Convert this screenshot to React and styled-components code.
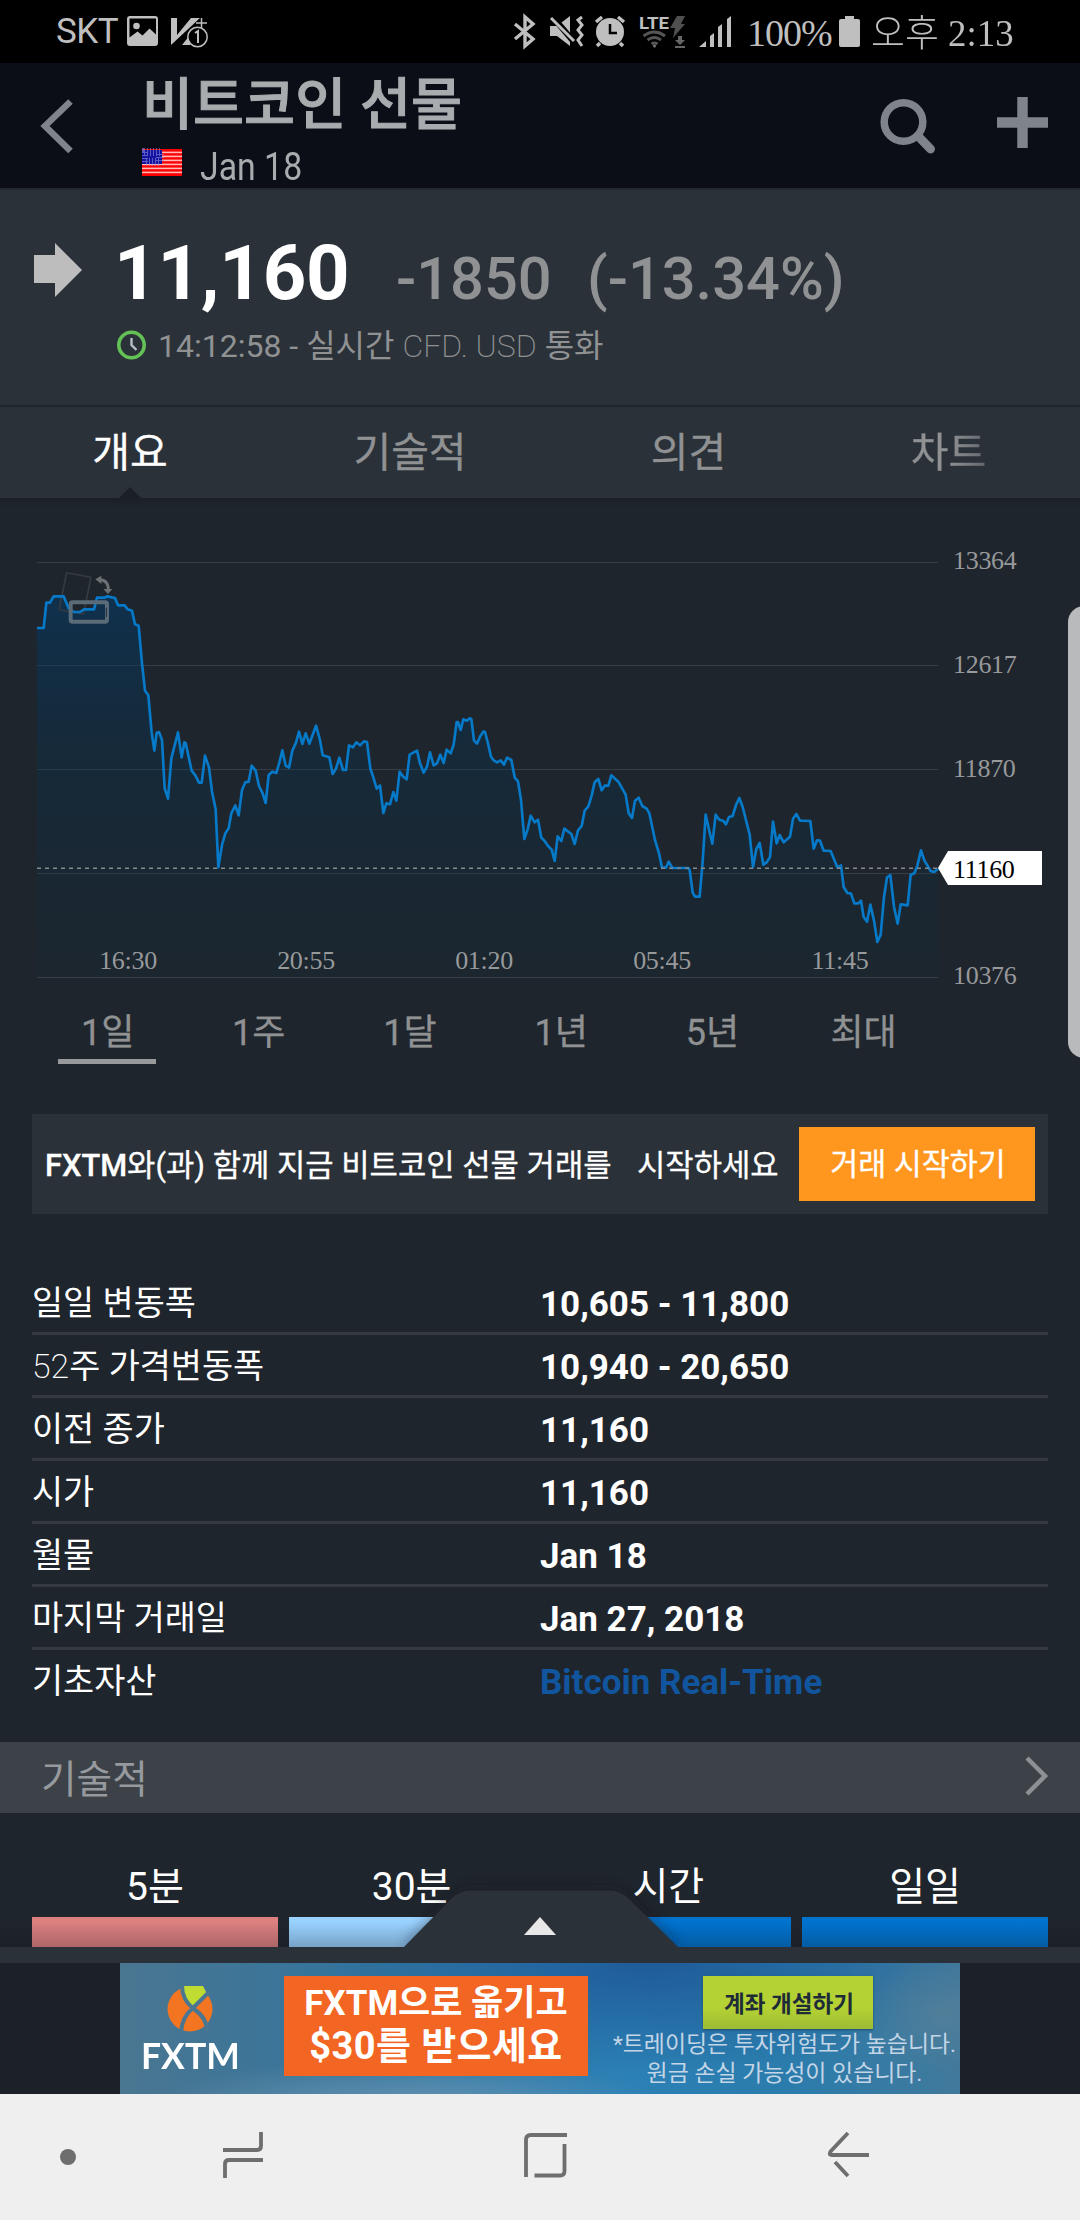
import React from 'react'
import styled, { createGlobalStyle } from 'styled-components';

const Global = createGlobalStyle`
*{
    box-sizing:border-box;
}
body{
    margin:0;
    background:#1f252c;
    font-family:Roboto,"Noto Sans CJK KR",sans-serif;
}
svg{
    display:block;
    flex:none;
}
`
const Screen = styled.div`
    width:1080px;
    height:2220px;
    position:relative;
    overflow:hidden;
    display:flex;
    flex-direction:column;
    background:#1f252c;
    white-space:nowrap;
`
const Squeeze = styled.span`
    display:inline-block;
    transform:scaleX(${p => p.x});
    transform-origin:left center;
`

/* status bar */
const StatusBar = styled.div`
    height:63px;
    background:#000;
    color:#bfbfbf;
    display:flex;
    justify-content:space-between;
    padding:0 61px 0 56px;
`
const Carrier = styled.span`
    font-size:35px;
    line-height:63px;
    width:71px;
    letter-spacing:-0.5px;
`
const StatusSide = styled.div`
    display:flex;
`
const Clock = styled.span`
    font-family:"Liberation Serif","Noto Sans CJK KR",serif;
    font-size:38px;
    line-height:67px;
    letter-spacing:${p => p.gap || 0}px;
    width:${p => p.w}px;
    padding-left:${p => p.left || 0}px;
    font-weight:300;
`

/* header */
const Header = styled.div`
    height:127px;
    background:#0b0e17;
    border-bottom:2px solid #23292f;
    color:#a9acae;
    display:flex;
`
const Title = styled.h1`
    margin:0 0 0 -4px;
    font-size:55.5px;
    font-weight:500;
    line-height:85px;
    height:80px;
    -webkit-text-stroke:1px #a9acae;
`
const TitleBox = styled.div`
    width:735px;
    padding-left:1px;
`
const SubTitle = styled.div`
    display:flex;
    font-size:38px;
    line-height:49px;
    margin-left:-4px;
`
const Month = styled.span`
    padding-left:18px;
`

/* price */
const Quote = styled.div`
    height:217px;
    background:#2b3138;
    border-bottom:2px solid #20262d;
    color:#8f9193;
    padding:38px 0 0 34px;
`
const PriceRow = styled.div`
    display:flex;
    height:90px;
    align-items:baseline;
`
const Arrow = styled.svg`
    align-self:flex-start;
    margin-top:15px;
`
const Price = styled.span`
    font-size:76px;
    font-weight:700;
    color:#fff;
    line-height:90px;
    width:282px;
    margin-left:32px;
    letter-spacing:-0.2px;
`
const Change = styled.span`
    font-size:59.6px;
    font-weight:500;
    width:${p => p.w}px;
`
const TimeRow = styled.div`
    display:flex;
    align-items:center;
    height:46px;
    padding:0 0 0 83px;
    margin-top:2px;
    font-size:32px;
    gap:11px;
    svg{
        margin-top:3px;
    }
`
const Thin = styled.span`
    font-weight:200;
`
const Regular = styled.span`
    font-weight:400;
`

/* tabs */
const Tabs = styled.div`
    height:91px;
    flex:none;
    background:#2b3138;
    display:flex;
    font-size:41px;
    line-height:92px;
`
const Tab = styled.div`
    position:relative;
    width:${p => p.w}px;
    text-align:center;
    color:${p => p.on ? '#fff' : '#8f9193'};
    -webkit-text-stroke:0.3px;
`
const FadeTab = styled(Tab)`
    color:transparent;
    background:linear-gradient(90deg,#8f9193 50%,#53585e 70%);
    background-clip:text;
    -webkit-background-clip:text;
`
const Notch = styled.i`
    position:absolute;
    left:119px;
    bottom:0;
    border:11px solid transparent;
    border-top:0;
    border-bottom-color:#1b2027;
`
const TabShade = styled.div`
    height:42px;
    background:linear-gradient(#1b2028,#1f252c 10px);
`

/* chart */
const ChartRow = styled.div`
    display:flex;
    height:440px;
    position:relative;
`
const Plot = styled.div`
    width:953px;
    position:relative;
`
const Times = styled.div`
    position:absolute;
    left:39px;
    top:406px;
    display:flex;
`
const Time = styled.span`
    width:178px;
    text-align:center;
    font:26px/30px "Liberation Serif",serif;
    letter-spacing:-0.3px;
    color:#97999b;
`
const Axis = styled.div`
    display:flex;
    flex-direction:column;
    font:26px/30px "Liberation Serif",serif;
    color:#97999b;
    padding-top:6px;
    gap:73.8px;
    letter-spacing:-0.3px;
`
const Tag = styled.div`
    position:absolute;
    left:938px;
    top:311px;
    width:104px;
    height:34px;
    padding-left:15px;
    background:#fff;
    color:#000;
    clip-path:polygon(10px 0,100% 0,100% 100%,10px 100%,0 50%);
    font:26px/37px "Liberation Serif",serif;
    letter-spacing:-0.3px;
`
const EdgeHandle = styled.div`
    position:absolute;
    right:-20px;
    top:606px;
    width:32px;
    height:452px;
    border-radius:16px;
    background:#b9babc;
`
const Ranges = styled.div`
    display:flex;
    padding-left:32px;
    height:134px;
    color:#8f9193;
    font-size:36px;
    line-height:48px;
    padding-top:29px;
`
const Range = styled.div`
    width:151.2px;
    text-align:center;
    -webkit-text-stroke:0.3px;
`
const Line = styled.div`
    width:98px;
    height:5px;
    margin:2px auto 0 26px;
    background:#98999b;
`

/* promo */
const Promo = styled.div`
    margin:0 32px;
    height:100px;
    flex:none;
    background:#2b3138;
    display:flex;
    align-items:center;
    padding:0 13px;
    color:#fff;
`
const PromoText = styled.span`
    width:${p => p.w}px;
    font-size:30.8px;
    padding-bottom:3px;
    -webkit-text-stroke:0.3px;
    b{
        font-weight:500;
    }
`
const PromoButton = styled.div`
    width:236px;
    height:74px;
    line-height:75px;
    text-align:center;
    background:#ff971e;
    font-size:30.4px;
    padding-left:2px;
    -webkit-text-stroke:0.3px;
`

/* details */
const Details = styled.div`
    margin:58px 32px 0;
    height:470px;
    flex:none;
`
const DetailRow = styled.div`
    height:63px;
    display:flex;
    align-items:center;
    color:#fff;
    border-bottom:3px solid ${p => p.last ? 'transparent' : '#353a42'};
`
const Label = styled.div`
    width:508px;
    font-size:33.8px;
    line-height:60px;
    padding-top:3px;
    font-weight:${p => p.thin ? 200 : 400};
`
const Value = styled.div`
    font-size:35px;
    line-height:62px;
    padding-top:5px;
    font-weight:700;
    color:${p => p.link ? '#12559f' : '#fff'};
`
const Section = styled.div`
    height:71px;
    flex:none;
    background:#3d4249;
    color:#969a9e;
    display:flex;
    align-items:center;
    justify-content:space-between;
    padding:0 31px 3px 41px;
    font-size:38.7px;
`
const Signals = styled.div`
    display:grid;
    grid-template-columns:repeat(4,1fr);
    gap:11px;
    padding:46px 32px 0;
    height:134px;
    flex:none;
`
const Signal = styled.div`
    color:#fff;
    font-size:39px;
    line-height:57px;
    text-align:center;
    i{
        display:block;
        height:30px;
        margin-top:1px;
        background:${p => p.bg};
    }
`
const Pull = styled.svg`
    position:absolute;
    left:0;
    top:1870px;
`
const Drawer = styled.div`
    height:16px;
    flex:none;
    background:#2b3138;
`

/* ad */
const AdZone = styled.div`
    height:131px;
    flex:none;
    background:#1c2028;
    padding:0 120px;
`
const Ad = styled.div`
    height:131px;
    display:flex;
    background:
        radial-gradient(ellipse 260px 50px at 290px 145px,#7fa0b8bb,transparent),
        radial-gradient(ellipse 90px 60px at 820px 50px,#5f839788,transparent),
        radial-gradient(ellipse 330px 110px at 530px 0px,#1f5b98,transparent),
        linear-gradient(90deg,#4a7691,#32749d 30%,#2b80b5 60%,#2b7cac 80%,#41799b);
`
const Brand = styled.div`
    width:164px;
    padding-top:23px;
    padding-left:21px;
    color:#fff;
    font:700 37px/45px Lato,sans-serif;
    svg{
        margin-left:26px;
    }
`
const AdOffer = styled.div`
    width:304px;
    height:100px;
    margin-top:13px;
    background:#f26522;
    color:#fff;
    font-size:35px;
    font-weight:700;
    line-height:42px;
    padding-top:7px;
    text-align:center;
`
const AdPrice = styled.span`
    font-size:38px;
    letter-spacing:0.4px;
`
const AdRight = styled.div`
    flex:1;
    padding-top:13px;
    padding-left:21px;
    text-align:center;
    color:#c3d5e6;
    font-size:22.9px;
    line-height:29px;
`
const AdButton = styled.div`
    width:170px;
    height:53px;
    margin:0 auto 1px 94px;
    line-height:57px;
    background:linear-gradient(#b4d233 60%,#9dbb35);
    box-shadow:0 1px 2px #1d4d6b;
    color:#1e2c38;
    font-size:22.5px;
    font-weight:700;
    padding-left:2px;
`
const NavBar = styled.div`
    height:126px;
    flex:none;
    background:#efefef;
`

const times = ['16:30', '20:55', '01:20', '05:45', '11:45']
const levels = ['13364', '12617', '11870', '', '10376']
const ranges = ['1일', '1주', '1달', '1년', '5년', '최대']
const details = [
    ['일일 변동폭', '10,605 - 11,800'],
    ['52주 가격변동폭', '10,940 - 20,650'],
    ['이전 종가', '11,160'],
    ['시가', '11,160'],
    ['월물', 'Jan 18'],
    ['마지막 거래일', 'Jan 27, 2018'],
    ['기초자산', 'Bitcoin Real-Time'],
]
const signals = [['5분', '#dd8080'], ['30분', '#99d2ff'], ['시간', '#0073cf'], ['일일', '#0073cf']]

// price line, three units per pixel
const line = '111,264 131,264 139,188 150,188 161,169 191,169 206,205 222,216 240,216 252,208 282,208 291,173 313,173 322,169 345,174 354,196 374,196 383,208 396,212 405,253 416,257 426,370 435,452 445,466 455,578 463,632 470,578 477,576 486,600 494,745 504,776 514,655 534,577 545,652 553,607 557,609 575,692 586,706 597,728 605,728 615,647 627,682 636,755 647,808 655,982 666,915 676,880 686,865 694,820 706,796 716,826 726,750 736,727 746,725 755,677 767,692 777,738 788,760 797,789 806,705 817,695 829,699 838,668 847,631 857,677 867,683 877,632 888,608 897,575 907,612 917,580 928,611 948,557 960,600 968,646 988,652 998,702 1008,686 1018,653 1029,690 1038,690 1047,616 1059,622 1069,607 1080,616 1092,604 1101,606 1111,685 1120,712 1130,746 1140,736 1150,819 1159,790 1170,793 1180,756 1189,782 1199,695 1210,710 1220,718 1229,644 1251,632 1260,670 1271,698 1281,680 1290,637 1301,676 1311,670 1321,644 1331,669 1340,629 1352,640 1361,614 1370,546 1374,546 1382,570 1390,538 1401,542 1409,535 1414,537 1422,602 1431,611 1441,588 1451,574 1455,576 1464,610 1473,650 1481,661 1491,667 1502,661 1512,674 1521,653 1534,660 1544,712 1554,724 1563,780 1573,897 1583,868 1592,827 1604,847 1614,839 1624,893 1634,903 1644,918 1655,929 1664,963 1673,889 1684,903 1693,866 1714,882 1724,912 1734,871 1745,858 1754,812 1765,799 1775,766 1784,727 1795,717 1805,751 1814,737 1825,737 1834,706 1855,725 1877,764 1886,820 1896,834 1905,782 1916,773 1927,798 1940,806 1948,820 1965,900 1977,940 1986,983 1998,983 2006,965 2017,984 2065,984 2069,990 2078,1058 2085,1070 2099,1070 2108,964 2117,824 2128,873 2137,911 2147,824 2158,839 2169,842 2178,853 2187,831 2198,828 2208,795 2218,774 2228,801 2249,884 2259,981 2269,927 2279,909 2290,974 2300,967 2310,951 2319,845 2330,910 2339,885 2351,907 2370,890 2379,836 2389,822 2400,842 2431,843 2441,926 2451,901 2460,902 2471,932 2492,933 2512,982 2523,976 2531,1041 2542,1059 2553,1061 2563,1090 2575,1090 2583,1082 2591,1131 2601,1145 2611,1094 2622,1142 2632,1206 2642,1184 2652,1071 2661,1012 2671,1005 2682,1100 2693,1151 2702,1093 2723,1096 2732,1004 2743,1000 2752,977 2763,931 2773,961 2792,993 2802,996 2814,987'

const LeftIcons = () => (
    <svg width="90" height="63" viewBox="127 0 90 63" fill="#bfbfbf">
        <path fillRule="evenodd" d="M130 16h25q3 0 3 3v24q0 3-3 3h-25q-3 0-3-3V19q0-3 3-3zM129.500 18.500v19l8-6 5 4 7-7 6.500 6v-16z" />
        <circle cx="136.500" cy="26" r="3.300" />
        <path d="M171 18h6v17l14-17h9l-29 27z" />
        <path d="M201.500 18v10M196 23h11" stroke="#bfbfbf" strokeWidth="1.500" />
        <path d="M182 45l8-10v10z" />
        <circle cx="197.500" cy="37" r="9.700" fill="#000" stroke="#bfbfbf" strokeWidth="1.500" />
        <path d="M195 33l3-2v12" stroke="#bfbfbf" strokeWidth="2" fill="none" />
    </svg>
)

const RightIcons = () => (
    <svg width="235" height="63" viewBox="512 0 235 63" fill="#bfbfbf">
        <path d="M515 24l18 15-8 7V17l8 7-18 15" fill="none" stroke="#bfbfbf" strokeWidth="3.400" />
        <path d="M550 26h7l13-10v30l-13-10h-7z" />
        <path d="M552 16l22 26" stroke="#000" strokeWidth="6" />
        <path d="M551 18l23 23" stroke="#bfbfbf" strokeWidth="3" />
        <path d="M582 17l-4 3 4 5-4 5 4 5-4 5 4 6" fill="none" stroke="#bfbfbf" strokeWidth="3" />
        <circle cx="610" cy="32" r="14" />
        <path d="M596 22l6-5M624 22l-6-5M600 43l-3 3M620 43l3 3" stroke="#bfbfbf" strokeWidth="3.500" />
        <path d="M610 24v9h7" fill="none" stroke="#000" strokeWidth="2.500" />
        <text x="639" y="29" fontSize="16" fontWeight="700" fontFamily="Roboto" textLength="30" lengthAdjust="spacingAndGlyphs">LTE</text>
        <g fill="none" stroke="#555" strokeWidth="3">
            <path d="M643.500 36q11-8 21.500 0M647.500 40q7-5 13.500 0M651.500 44q3-2 6 0" />
        </g>
        <circle cx="654.500" cy="46" r="1.500" fill="#777" />
        <path d="M677 16h8l-4 8h4l-12 14 2-10h-5z" fill="#4f4f4f" />
        <path d="M678 36h4v4h3l-5 5-5-5h3zM675 46h10v2h-10z" fill="#666" />
        <path d="M706 41v6h-7zM714 33v14h-4V36zM722 24v23h-4V27zM731 16v31h-4V19z" />
    </svg>
)

const Flag = () => (
    <svg width="40" height="33" viewBox="0 -6 40 33">
        <rect width="40" height="27" fill="#f00" />
        {[2, 6, 10, 14, 18, 22].map(y => <rect key={y} y={y + 0.6} width="40" height="1.600" fill="#ffb9b9" />)}
        <rect y="1" width="20" height="14" fill="#1414a0" />
        <rect x="2" y="3" width="16" height="10" fill="none" stroke="#8a8ae0" strokeWidth="8" strokeDasharray="1 2" opacity=".6" />
    </svg>
)

const Chart = () => (
    <svg width="953" height="440" viewBox="0 0 2859 1320">
        <defs>
            <linearGradient id="area" gradientUnits="userSpaceOnUse" x1="0" y1="169" x2="0" y2="1312">
                <stop offset="0" stopColor="#003c6e" stopOpacity=".5" />
                <stop offset=".4" stopColor="#00355a" stopOpacity=".3" />
                <stop offset="1" stopColor="#003048" stopOpacity=".1" />
            </linearGradient>
        </defs>
        <g stroke="#363d44" strokeWidth="3">
            {[67.5, 376.5, 688.5, 1000.5, 1312.5].map(y => <path key={y} d={`M111 ${y}H2814`} />)}
        </g>
        <polygon points={`111,1311 ${line} 2814,1311`} fill="url(#area)" />
        <path d="M203 99l66 12q4 1 3 5l-21 103q-1 4-5 3l-65-12q-4-1-3-5l21-103q1-4 4-3z" fill="none" stroke="#353b42" strokeWidth="5" />
        <polyline points={line} fill="none" stroke="#0679c8" strokeWidth="8" strokeLinejoin="round" />
        <path d="M111 984.500H2814" stroke="#84898c" strokeWidth="4.500" strokeDasharray="12 12" />
        <rect x="212" y="187" width="109" height="58" rx="6" fill="none" stroke="#5b6b78" strokeWidth="12" />
        <path d="M319 203v28" stroke="#1b2c3a" strokeWidth="3" />
        <path d="M300 119q26 2 25 32" fill="none" stroke="#6b7074" strokeWidth="9" />
        <path d="M286 118l18-11v25zM310 147h27l-13 15z" fill="#6b7074" />
    </svg>
)

const App = () => {
    return (
        <Screen>
            <Global />
            <StatusBar>
                <StatusSide>
                    <Carrier>SKT</Carrier>
                    <LeftIcons />
                </StatusSide>
                <StatusSide>
                    <RightIcons />
                    <Clock w={92} gap={-1}>100%</Clock>
                    <svg width="21" height="63" viewBox="0 0 21 63"><path d="M6 16h9v3h4q2 0 2 2v24q0 2-2 2H2q-2 0-2-2V21q0-2 2-2h4z" fill="#bfbfbf" /></svg>
                    <Clock w={159} left={11}><Squeeze x={0.97}>오후 2:13</Squeeze></Clock>
                </StatusSide>
            </StatusBar>
            <Header>
                <svg width="145" height="125" viewBox="0 63 145 125"><path d="M70.500 101.500L45 126l25.500 25" fill="none" stroke="#7f848b" strokeWidth="6.500" /></svg>
                <TitleBox>
                    <Title>비트코인 선물</Title>
                    <SubTitle>
                        <Flag />
                        <Month><Squeeze x={0.89}>Jan 18</Squeeze></Month>
                    </SubTitle>
                </TitleBox>
                <svg width="200" height="125" viewBox="880 63 200 125" fill="none" stroke="#7f848b">
                    <circle cx="903.500" cy="122" r="19.300" strokeWidth="7.500" />
                    <path d="M918 136l12.500 13" strokeWidth="9" strokeLinecap="round" />
                    <path d="M997 122.500h51M1022.500 97v51" strokeWidth="10.500" />
                </svg>
            </Header>
            <Quote>
                <PriceRow>
                    <Arrow width="48" height="54" viewBox="0 0 48 54"><path d="M0 12h21V0l27 27-27 27V40H0z" fill="#bdbdbd" /></Arrow>
                    <Price>11,160</Price>
                    <Change w={191}>-1850</Change>
                    <Change>(-13.34%)</Change>
                </PriceRow>
                <TimeRow>
                    <svg width="30" height="30" viewBox="0 0 30 30" fill="none">
                        <circle cx="14.500" cy="15" r="12.700" stroke="#63c155" strokeWidth="3.600" />
                        <path d="M14.500 8v7l5 5" stroke="#b5c0c0" strokeWidth="2.400" />
                    </svg>
                    <span>14:12:58 - 실시간 <Thin>CFD. USD</Thin> 통화</span>
                </TimeRow>
            </Quote>
            <Tabs>
                <Tab w={260} on>개요<Notch /></Tab>
                <Tab w={300}>기술적</Tab>
                <Tab w={257}>의견</Tab>
                <FadeTab w={263}>차트</FadeTab>
            </Tabs>
            <TabShade />
            <ChartRow>
                <Plot>
                    <Chart />
                    <Times>{times.map(t => <Time key={t}>{t}</Time>)}</Times>
                </Plot>
                <Axis>{levels.map((l, i) => <span key={i}>{l || '\u00a0'}</span>)}</Axis>
                <Tag>11160</Tag>
            </ChartRow>
            <Ranges>
                {ranges.map((r, i) => <Range key={r}>{r}{i === 0 && <Line />}</Range>)}
            </Ranges>
            <Promo>
                <PromoText w={592}><b>FXTM</b>와(과) 함께 지금 비트코인 선물 거래를</PromoText>
                <PromoText w={162}>시작하세요</PromoText>
                <PromoButton>거래 시작하기</PromoButton>
            </Promo>
            <Details>
                {details.map(([k, v], i) => (
                    <DetailRow key={k} last={i === 6 ? 1 : 0}>
                        <Label thin={i === 1 ? 1 : 0}>{i === 1 ? <>52<Regular>주 가격변동폭</Regular></> : k}</Label>
                        <Value link={i === 6 ? 1 : 0}>{v}</Value>
                    </DetailRow>
                ))}
            </Details>
            <Section>
                기술적
                <svg width="24" height="40" viewBox="0 0 24 40"><path d="M2 2l18 18L2 38" fill="none" stroke="#8d9196" strokeWidth="4.500" /></svg>
            </Section>
            <Signals>
                {signals.map(([t, c]) => <Signal key={t} bg={c}>{t}<i /></Signal>)}
            </Signals>
            <Pull width="1080" height="77" viewBox="0 1870 1080 77">
                <defs>
                    <linearGradient id="shade" x1="0" y1="0" x2="0" y2="1">
                        <stop offset="0" stopColor="#15151f" stopOpacity="0" />
                        <stop offset="1" stopColor="#15151f" stopOpacity=".25" />
                    </linearGradient>
                    <filter id="soft" x="-20%" y="-50%" width="140%" height="200%"><feGaussianBlur stdDeviation="7" /></filter>
                </defs>
                <rect x="0" y="1922" width="1080" height="25" fill="url(#shade)" />
                <path d="M404 1947l48-49q8-8 18-8h140q10 0 18 8l50 49z" fill="#15151f" opacity=".5" filter="url(#soft)" />
                <path d="M404 1947l48-49q8-7.500 18-7.500h140q10 0 18 7.500l50 49z" fill="#2b3138" />
                <path d="M524 1935l16-18 16 18z" fill="#e8e8e8" />
            </Pull>
            <Drawer />
            <AdZone>
                <Ad>
                    <Brand>
                        <svg width="46" height="46" viewBox="0 0 46 46">
                            <circle cx="23" cy="23" r="22.500" fill="#f47521" />
                            <path d="M16 0h20l4 8-13 14-10-10z" fill="#c0dc33" />
                            <path d="M15 0q0 14 12 23 13 9 13 22M42 6L26 22Q15 31 14 46" fill="none" stroke="#4a7691" strokeWidth="4" />
                        </svg>
                        <Squeeze x={0.96}>FXTM</Squeeze>
                    </Brand>
                    <AdOffer>FXTM으로 옮기고<br /><AdPrice>$30를 받으세요</AdPrice></AdOffer>
                    <AdRight>
                        <AdButton>계좌 개설하기</AdButton>
                        *트레이딩은 투자위험도가 높습니다.<br />원금 손실 가능성이 있습니다.
                    </AdRight>
                </Ad>
            </AdZone>
            <NavBar>
                <svg width="1080" height="126" viewBox="0 2094 1080 126" fill="none" stroke="#6e6e6e" strokeWidth="3.800">
                    <circle cx="68" cy="2157" r="8" fill="#6e6e6e" stroke="none" />
                    <path d="M223 2150h34q4 0 4-4v-14M225 2178v-14q0-4 4-4h34" />
                    <path d="M526 2177v-37q0-5 5-5h36M564.500 2144v27q0 4.500-4.500 4.500h-25.500" />
                    <path d="M848 2133l-17 18q-3 4 1 4h37M835 2162l13 14" />
                </svg>
            </NavBar>
            <EdgeHandle />
        </Screen>
    )
}

export default App
